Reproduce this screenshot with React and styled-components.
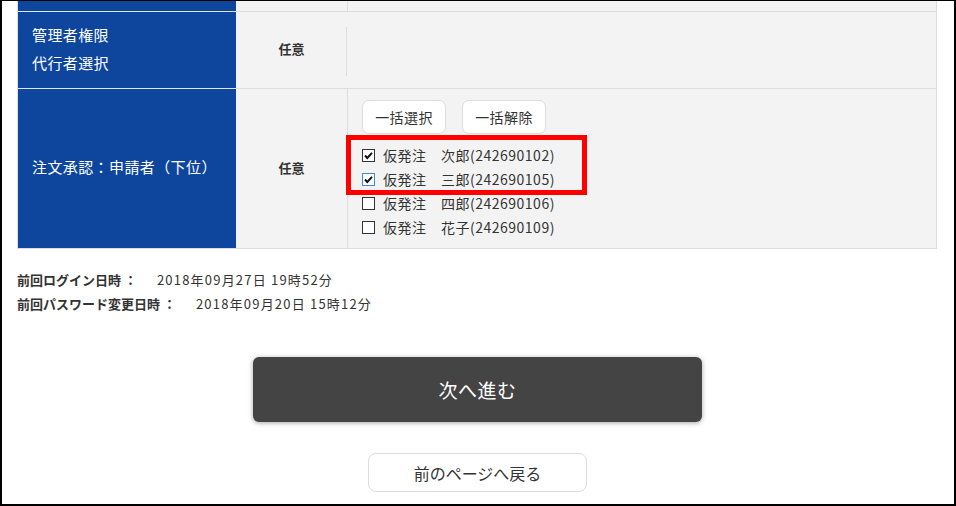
import React from "react";
import styled, { createGlobalStyle } from "styled-components";

const GlobalStyle = createGlobalStyle`
  html, body {
    margin: 0;
    padding: 0;
    background: #fff;
  }
  body {
    font-family: "Noto Sans CJK JP", "Noto Sans", sans-serif;
    color: #333;
  }
`;

const Frame = styled.div`
  box-sizing: border-box;
  width: 956px;
  height: 506px;
  border: 2px solid #000;
  border-top-width: 1px;
  padding: 0 17px 0 15px;
  overflow: hidden;
`;

const Table = styled.div`
  border: 1px solid #ddd;
  border-top: none;
`;

const Row = styled.div`
  display: grid;
  grid-template-columns: 218px 111px 1fr;
  min-height: ${(p) => p.$h || 0}px;
  & + & {
    border-top: 1px solid #ddd;
  }
`;

const HeadCell = styled.div`
  background: #0e469e;
  color: #fff;
  font-size: 15px;
  line-height: 28px;
  letter-spacing: 0.4px;
  padding: 0 14px 3px;
  display: flex;
  flex-direction: column;
  justify-content: center;
  box-shadow: 0 -1px 0 #dfe3ec;
`;

const NeedCell = styled.div`
  background: #f3f3f3;
  font-size: 13px;
  font-weight: bold;
  padding-bottom: 3px;
  display: flex;
  align-items: center;
  justify-content: center;
`;

const BodyCell = styled.div`
  position: relative;
  background: #f3f3f3;
  border-left: ${(p) => (p.$noLine ? "none" : "1px solid #ddd")};
  padding: ${(p) => (p.$flush ? "0" : "11px 14px 9px")};
  display: flex;
  flex-direction: column;
  justify-content: center;
`;

const ShortLine = styled.div`
  margin-left: -15px;
  height: 49px;
  border-left: 1px solid #ddd;
`;

const ButtonRow = styled.div`
  display: flex;
  gap: 16px;
  margin-bottom: 9px;
`;

const SmallButton = styled.button`
  box-sizing: border-box;
  width: 84px;
  height: 34px;
  background: #fff;
  border: 1px solid #ddd;
  border-radius: 7px;
  font-family: inherit;
  font-size: 14px;
  letter-spacing: 0.4px;
  color: #333;
  padding: 0;
`;

const CheckList = styled.div`
  display: flex;
  flex-direction: column;
`;

const CheckRow = styled.label`
  display: flex;
  align-items: center;
  gap: 8px;
  height: 24px;
  font-size: 14px;
  letter-spacing: 0.5px;
  color: #333;
`;

const Highlight = styled.div`
  position: absolute;
  left: -2px;
  top: 46px;
  width: 241px;
  height: 60px;
  box-sizing: border-box;
  border: 5px solid #ff0000;
  pointer-events: none;
`;

const Info = styled.div`
  margin-top: 19px;
  font-size: 13px;
  line-height: 24px;
  color: #333;
`;

const InfoLabel = styled.span`
  font-weight: bold;
  margin-right: 20px;
`;

const InfoValue = styled.span`
  letter-spacing: 1.2px;
`;

const Actions = styled.div`
  display: flex;
  flex-direction: column;
  align-items: center;
  margin-top: 41px;
  gap: 31px;
`;

const NextButton = styled.button`
  width: 449px;
  height: 65px;
  margin-left: 1px;
  background: #444;
  color: #fff;
  border: none;
  border-radius: 6px;
  box-shadow: 0 1px 5px rgba(0, 0, 0, 0.35);
  font-family: inherit;
  font-size: 19px;
  letter-spacing: 0.5px;
`;

const BackButton = styled.button`
  box-sizing: border-box;
  width: 219px;
  height: 39px;
  margin-left: 1px;
  background: #fff;
  color: #333;
  border: 1px solid #ddd;
  border-radius: 8px;
  font-family: inherit;
  font-size: 16px;
`;

const Box = ({ checked, focus }) => (
  <svg width="13" height="13" viewBox="0 0 13 13">
    <rect x="0.5" y="0.5" width="12" height="12" fill="#fff" stroke={focus ? "#3c8dd6" : "#333"} />
    {checked && (
      <path d="M3 6.5 L5.3 9 L10 3.8" fill="none" stroke="#111" strokeWidth="2" />
    )}
  </svg>
);

const people = [
  { name: "次郎", id: "242690102", checked: true },
  { name: "三郎", id: "242690105", checked: true, focus: true },
  { name: "四郎", id: "242690106" },
  { name: "花子", id: "242690109" },
];

export default function App() {
  return (
    <>
      <GlobalStyle />
      <Frame>
        <Table>
          <Row $h={10}>
            <HeadCell />
            <NeedCell />
            <BodyCell $flush />
          </Row>
          <Row $h={76}>
            <HeadCell>
              <div>管理者権限</div>
              <div>代行者選択</div>
            </HeadCell>
            <NeedCell>任意</NeedCell>
            <BodyCell $noLine>
              <ShortLine />
            </BodyCell>
          </Row>
          <Row>
            <HeadCell>注文承認：申請者（下位）</HeadCell>
            <NeedCell>任意</NeedCell>
            <BodyCell>
              <ButtonRow>
                <SmallButton>一括選択</SmallButton>
                <SmallButton>一括解除</SmallButton>
              </ButtonRow>
              <CheckList>
                {people.map((p) => (
                  <CheckRow key={p.id}>
                    <Box checked={p.checked} focus={p.focus} />
                    <span>
                      仮発注　{p.name}({p.id})
                    </span>
                  </CheckRow>
                ))}
              </CheckList>
              <Highlight />
            </BodyCell>
          </Row>
        </Table>
        <Info>
          <div>
            <InfoLabel>前回ログイン日時 ：</InfoLabel>
            <InfoValue>2018年09月27日 19時52分</InfoValue>
          </div>
          <div>
            <InfoLabel>前回パスワード変更日時 ：</InfoLabel>
            <InfoValue>2018年09月20日 15時12分</InfoValue>
          </div>
        </Info>
        <Actions>
          <NextButton>次へ進む</NextButton>
          <BackButton>前のページへ戻る</BackButton>
        </Actions>
      </Frame>
    </>
  );
}
